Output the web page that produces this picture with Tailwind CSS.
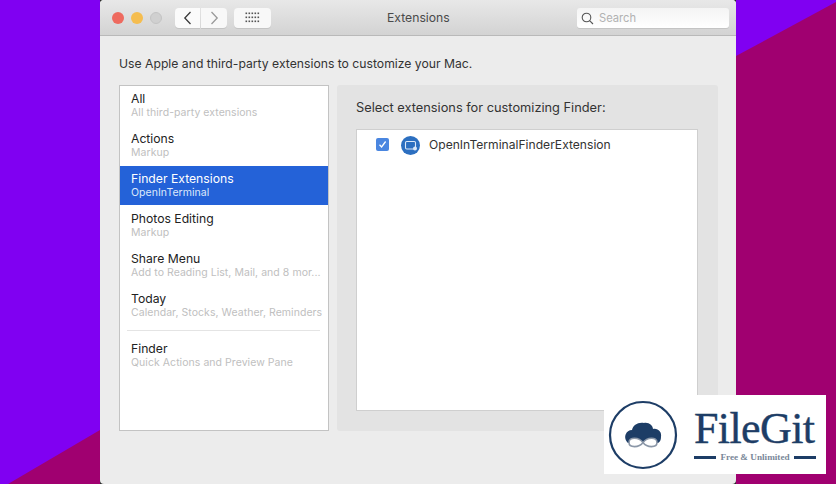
<!DOCTYPE html>
<html>
<head>
<meta charset="utf-8">
<script src="https://cdn.jsdelivr.net/npm/@tailwindcss/browser@4"></script>
</head>
<body class="m-0">
<div class="relative w-[836px] h-[484px] overflow-hidden bg-[#8000f2] font-['Inter','Liberation_Sans',sans-serif] text-[#2a2a2a]">
  <svg class="absolute left-0 top-0" width="836" height="484" viewBox="0 0 836 484">
    <polygon points="8,484 100,430 100,484" fill="#a00070"/>
    <polygon points="736,56 836,2 836,484 736,484" fill="#a00070"/>
  </svg>
  <div class="relative ml-[100px] w-[636px] h-[484px] bg-[#2a2a2a]">
  <div class="w-full h-full bg-[#ececec] rounded-[4px] flex flex-col overflow-hidden">
    <div class="h-[36px] shrink-0 bg-gradient-to-b from-[#e8e8e8] to-[#d3d3d3] border-b border-[#b9b9b9] flex items-center relative">
      <div class="flex items-center gap-[7px] ml-[12px]">
        <div class="w-[12px] h-[12px] rounded-full bg-[#ee6a5f]"></div>
        <div class="w-[12px] h-[12px] rounded-full bg-[#f5bd4f]"></div>
        <div class="w-[12px] h-[12px] rounded-full bg-[#d0d0d0] border border-[#c4c4c4]"></div>
      </div>
      <div class="flex gap-px ml-[13px]">
        <div class="w-[25px] h-[20px] bg-[#fbfbfb] rounded-l-[4px] flex items-center justify-center shadow-[0_1px_0_#c4c4c4]">
          <svg width="10" height="14" viewBox="0 0 10 14" fill="none" stroke="#3a3a3a" stroke-width="1.3"><path d="M7.5 1 L1.8 7 L7.5 13"/></svg>
        </div>
        <div class="w-[26px] h-[20px] bg-[#f8f8f8] rounded-r-[4px] flex items-center justify-center shadow-[0_1px_0_#c4c4c4]">
          <svg width="10" height="14" viewBox="0 0 10 14" fill="none" stroke="#9a9a9a" stroke-width="1.3"><path d="M2.5 1 L8.2 7 L2.5 13"/></svg>
        </div>
      </div>
      <div class="w-[37px] h-[20px] ml-[7px] bg-[#f8f8f8] rounded-[4px] flex items-center justify-center shadow-[0_1px_0_#c4c4c4]">
        <svg width="15" height="11" viewBox="0 0 15 11" fill="#555">
          <rect x="0.5" y="0.5" width="1.6" height="1.6"/><rect x="3.5" y="0.5" width="1.6" height="1.6"/><rect x="6.5" y="0.5" width="1.6" height="1.6"/><rect x="9.5" y="0.5" width="1.6" height="1.6"/><rect x="12.5" y="0.5" width="1.6" height="1.6"/>
          <rect x="0.5" y="4.5" width="1.6" height="1.6"/><rect x="3.5" y="4.5" width="1.6" height="1.6"/><rect x="6.5" y="4.5" width="1.6" height="1.6"/><rect x="9.5" y="4.5" width="1.6" height="1.6"/><rect x="12.5" y="4.5" width="1.6" height="1.6"/>
          <rect x="0.5" y="8.5" width="1.6" height="1.6"/><rect x="3.5" y="8.5" width="1.6" height="1.6"/><rect x="6.5" y="8.5" width="1.6" height="1.6"/><rect x="9.5" y="8.5" width="1.6" height="1.6"/><rect x="12.5" y="8.5" width="1.6" height="1.6"/>
        </svg>
      </div>
      <div class="absolute left-[287px] top-[10px] text-[12.2px] leading-[16px] text-[#4a4a4a]">Extensions</div>
      <div class="absolute left-[477px] top-[8px] w-[152px] h-[20px] bg-gradient-to-b from-[#f4f4f4] to-[#ffffff] rounded-[3px] shadow-[0_1px_0_#c4c4c4] flex items-center pl-[4px] gap-[5px]">
        <svg width="13" height="13" viewBox="0 0 13 13" fill="none" stroke="#555" stroke-width="1.1"><circle cx="5.5" cy="5.5" r="4.3"/><path d="M8.6 8.6 L12 12"/></svg>
        <span class="text-[11.2px] leading-[16px] text-[#b2b2b2]">Search</span>
      </div>
    </div>
    <div class="flex-1 flex flex-col pl-[19px] pr-[18px]">
      <p class="mt-[20px] h-[16px] text-[12.2px] leading-[16px] text-[#333] whitespace-nowrap">Use Apple and third-party extensions to customize your Mac.</p>
      <div class="mt-[13px] flex gap-[8px] h-[346px]">
        <div class="w-[210px] h-full bg-white border border-[#c3c3c3] flex flex-col">
          <div class="h-[40px] shrink-0 pl-[11px] pt-[5px]"><div class="text-[12.2px] leading-[15px] text-[#222]">All</div><div class="text-[10.5px] leading-[13px] text-[#c0c0c0] tracking-[0.05px] whitespace-nowrap">All third-party extensions</div></div>
          <div class="h-[40px] shrink-0 pl-[11px] pt-[5px]"><div class="text-[12.2px] leading-[15px] text-[#222]">Actions</div><div class="text-[10.5px] leading-[13px] text-[#c0c0c0] tracking-[0.05px] whitespace-nowrap">Markup</div></div>
          <div class="h-[39px] shrink-0 pl-[11px] pt-[5px] bg-[#2462d8]"><div class="text-[12.2px] leading-[15px] text-white">Finder Extensions</div><div class="text-[10.5px] leading-[13px] text-[#dce8fb] tracking-[0.05px] whitespace-nowrap">OpenInTerminal</div></div>
          <div class="h-[40px] shrink-0 pl-[11px] pt-[6px]"><div class="text-[12.2px] leading-[15px] text-[#222]">Photos Editing</div><div class="text-[10.5px] leading-[13px] text-[#c0c0c0] tracking-[0.05px] whitespace-nowrap">Markup</div></div>
          <div class="h-[40px] shrink-0 pl-[11px] pt-[6px]"><div class="text-[12.2px] leading-[15px] text-[#222]">Share Menu</div><div class="text-[10.5px] leading-[13px] text-[#c0c0c0] tracking-[0.05px] whitespace-nowrap">Add to Reading List, Mail, and 8 mor...</div></div>
          <div class="h-[40px] shrink-0 pl-[11px] pt-[6px]"><div class="text-[12.2px] leading-[15px] text-[#222]">Today</div><div class="text-[10.5px] leading-[13px] text-[#c0c0c0] tracking-[0.05px] whitespace-nowrap overflow-hidden">Calendar, Stocks, Weather, Reminders</div></div>
          <div class="ml-[7px] mr-[8px] mt-[5px] h-px shrink-0 bg-[#e4e4e4]"></div>
          <div class="shrink-0 pl-[11px] pt-[10px]"><div class="text-[12.2px] leading-[15px] text-[#222]">Finder</div><div class="text-[10.5px] leading-[13px] text-[#c0c0c0] tracking-[0.05px] whitespace-nowrap">Quick Actions and Preview Pane</div></div>
        </div>
        <div class="w-[381px] h-full bg-[#e3e3e3] rounded-[3px] pl-[19px] pr-[20px] pt-[15px] flex flex-col">
          <p class="h-[16px] text-[12.8px] leading-[16px] text-[#333] whitespace-nowrap">Select extensions for customizing Finder:</p>
          <div class="mt-[13px] h-[282px] bg-white border border-[#cfcfcf] flex items-start pt-[6px] pl-[19px]">
            <div class="w-[13px] h-[13px] mt-[2px] rounded-[2px] bg-[#4a86e0] flex items-center justify-center">
              <svg width="9" height="9" viewBox="0 0 9 9" fill="none" stroke="#fff" stroke-width="1.3"><path d="M1.5 4.8 L3.6 7 L7.6 1.5"/></svg>
            </div>
            <svg class="ml-[12px]" width="19" height="19" viewBox="0 0 19 19"><circle cx="9.5" cy="9.5" r="9.5" fill="#2c6fc0"/><rect x="4.5" y="5.5" width="10" height="7.5" rx="1.2" fill="none" stroke="#dbe8f8" stroke-width="1.1"/><circle cx="14" cy="12.5" r="2" fill="#dbe8f8"/></svg>
            <span class="ml-[9px] text-[12.1px] leading-[18px] text-[#333] whitespace-nowrap">OpenInTerminalFinderExtension</span>
          </div>
        </div>
      </div>
    </div>
  </div>
  </div>
  <div class="absolute left-[604px] top-[395px] w-[222px] h-[79px] bg-white flex items-center">
    <svg class="ml-[4px] shrink-0" width="70" height="70" viewBox="0 0 70 70">
      <circle cx="35" cy="35" r="33" fill="none" stroke="#1d3d66" stroke-width="2.2"/>
      <path d="M19 42 C15 37 18 30 24 30 C25 25 30 22 36 23 C41 22 45 26 45 29 C50 28 54 32 53 37 C53 40 52 42 50 43 L20 43 Z" fill="#1d3d66"/>
      <path d="M35 42.5 C31 37 21 36.5 21 42.5 C21 48 31 48 35 42.5 C39 37 49 36.5 49 42.5 C49 48 39 48 35 42.5 Z" fill="#fff" stroke="#8b97a8" stroke-width="1.6"/>
    </svg>
    <div class="ml-[16px] w-[122px] flex flex-col">
      <div class="font-['Liberation_Serif',serif] text-[44px] leading-[44px] text-[#1d3d66] tracking-[-0.6px] [-webkit-text-stroke:0.4px_#1d3d66] whitespace-nowrap">FileGit</div>
      <div class="flex items-center justify-between mt-[1px]">
        <div class="h-[3px] w-[22px] bg-[#1d3d66]"></div>
        <span class="font-['Liberation_Serif',serif] text-[9.2px] leading-[10px] font-bold text-[#7a8899] whitespace-nowrap">Free &amp; Unlimited</span>
        <div class="h-[3px] w-[22px] bg-[#1d3d66]"></div>
      </div>
    </div>
  </div>
</div>
</body>
</html>
